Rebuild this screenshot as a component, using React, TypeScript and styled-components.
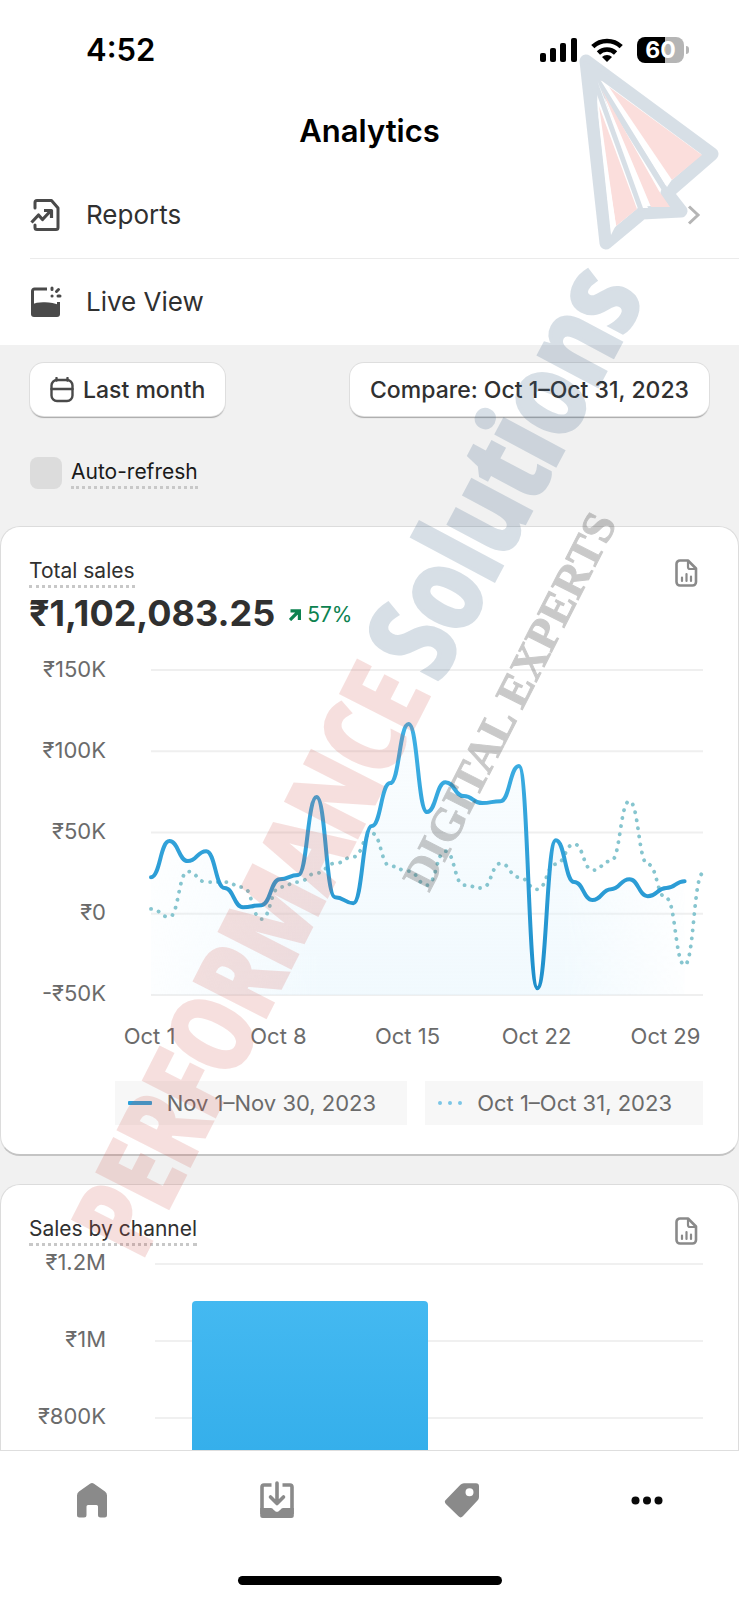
import React from 'react';
import styled, { createGlobalStyle } from 'styled-components';

const GlobalStyle = createGlobalStyle`
  *, *::before, *::after { box-sizing: border-box; }
  body { margin: 0; background: #fff; }
  body, button, input { font-family: Inter, "Liberation Sans", sans-serif; }
  h1, h2, p, ul { margin: 0; padding: 0; font-weight: 400; }
  svg { display: block; }
`;

const Screen = styled.div`
  position: relative;
  display: flex;
  flex-direction: column;
  height: 100vh;
  overflow: hidden;
  background: #fff;
  color: #303030;
`;

const StatusBar = styled.header`
  display: flex;
  align-items: center;
  justify-content: space-between;
  padding: 32px 50px 0 86px;
`;

const Clock = styled.time`
  font-size: 31px;
  line-height: 36px;
  font-weight: 600;
  color: #000;
`;

const StatusIcons = styled.div`
  display: flex;
  align-items: center;
  gap: 14px;
`;

const Battery = styled.div`
  display: flex;
  align-items: center;
  gap: 2px;

  &::after {
    content: '';
    width: 3px;
    height: 8px;
    border-radius: 0 3px 3px 0;
    background: #b5b5b5;
  }
`;

const BatteryLevel = styled.span<{ $percent: number }>`
  width: 47px;
  border-radius: 8px;
  background: linear-gradient(
    to right,
    #000 ${(p) => p.$percent}%,
    #b5b5b5 ${(p) => p.$percent}%
  );
  color: #fff;
  font-size: 23px;
  line-height: 26px;
  font-weight: 700;
  text-align: center;
`;

const PageTitle = styled.h1`
  padding: 43px 0 21px;
  font-size: 31px;
  line-height: 40px;
  font-weight: 600;
  text-align: center;
  color: #000;
`;

const MenuList = styled.ul`
  list-style: none;
`;

const MenuItem = styled.li`
  margin-left: 30px;

  & + & {
    border-top: 1px solid #ebebeb;
  }
`;

const MenuLink = styled.a`
  display: flex;
  align-items: center;
  gap: 24px;
  height: 86px;
  padding-right: 38px;
  font-size: 26px;
  line-height: 32px;
  color: #303030;
  text-decoration: none;
`;

const MenuLabel = styled.span`
  flex: 1;
`;

const Content = styled.main`
  flex: 1;
  min-height: 0;
  overflow: hidden;
  background: #f1f1f1;
`;

const Filters = styled.div`
  display: flex;
  justify-content: space-between;
  padding: 18px 30px 0;
`;

const FilterButton = styled.button`
  display: flex;
  align-items: center;
  gap: 9px;
  height: 53px;
  padding: 0 20px;
  border: 0;
  border-radius: 14px;
  background: #fff;
  box-shadow: 0 0 0 1px #dedede, 0 2px 1px #a8a8a8;
  color: #303030;
  font-size: 23px;
  line-height: 28px;
  font-weight: 500;
`;

const AutoRefresh = styled.label`
  display: flex;
  align-items: center;
  gap: 9px;
  padding: 41px 30px 37px;
  font-size: 21px;
  line-height: 28px;
  color: #1a1a1a;
`;

const Checkbox = styled.input`
  appearance: none;
  width: 32px;
  height: 32px;
  margin: 0;
  border-radius: 8px;
  background: #dcdcdc;
`;

const DottedText = styled.span`
  border-bottom: 3px dotted #c8c8c8;
`;

const Card = styled.section`
  margin-bottom: 28px;
  padding: 30px 35px 29px 28px;
  border: 1px solid #dcdcdc;
  border-bottom: 2px solid #c4c4c4;
  border-radius: 20px;
  background: #fff;
`;

const CardHeader = styled.div`
  display: flex;
  justify-content: space-between;
  align-items: flex-start;
`;

const CardTitle = styled.h2`
  border-bottom: 3px dotted #c8c8c8;
  font-size: 21px;
  line-height: 28px;
`;

const IconButton = styled.button`
  padding: 2px 5px 0 0;
  border: 0;
  background: none;
`;

const Headline = styled.p`
  display: flex;
  align-items: center;
  gap: 14px;
  padding-top: 2px;
`;

const HeadlineValue = styled.strong`
  font-size: 36px;
  line-height: 46px;
  font-weight: 700;
`;

const Change = styled.span`
  display: flex;
  align-items: center;
  gap: 6px;
  padding-top: 4px;
  font-size: 21px;
  line-height: 28px;
  color: #0c8250;
`;

const Chart = styled.div<{ $gap: number; $offset: number }>`
  display: flex;
  gap: ${(p) => p.$gap}px;
  margin-top: ${(p) => p.$offset}px;
`;

const YAxis = styled.div<{ $step: number }>`
  display: grid;
  grid-auto-rows: ${(p) => p.$step}px;
  width: 77px;
  margin-top: -14px;
  font-size: 22px;
  line-height: 26px;
  text-align: right;
  color: #6b6b6b;
`;

const Plot = styled.div`
  flex: 1;
  min-width: 0;

  svg {
    width: 100%;
    overflow: visible;
  }
`;

const XAxis = styled.div`
  display: grid;
  grid-template-columns: repeat(5, 1fr);
  margin: 27px -27px 0 -66px;
  font-size: 22px;
  line-height: 28px;
  text-align: center;
  color: #6b6b6b;
`;

const Legend = styled.div`
  display: flex;
  justify-content: flex-end;
  gap: 18px;
  margin-top: 20px;
`;

const LegendItem = styled.div`
  display: flex;
  align-items: center;
  gap: 15px;
  height: 44px;
  padding: 0 31px 0 13px;
  background: #f7f7f7;
  font-size: 22px;
  line-height: 28px;
  white-space: nowrap;
  color: #6b6b6b;
`;

const BarPlot = styled(Plot)`
  position: relative;
`;

const GridLine = styled.div`
  height: 77px;
  border-top: 2px solid #f0f0f0;
`;

const Bar = styled.div`
  position: absolute;
  top: 38px;
  bottom: 0;
  left: 37px;
  width: 43%;
  border-radius: 4px 4px 0 0;
  background: linear-gradient(#44b9f1, #35afeb 150px, #1f9fe0);
`;

const TabBar = styled.nav`
  border-top: 1px solid #dedede;
  background: #fff;
`;

const Tabs = styled.div`
  display: grid;
  grid-template-columns: repeat(4, 1fr);
  justify-items: center;
  padding: 29px 0 56px;
`;

const Tab = styled.a<{ $active?: boolean }>`
  color: ${(p) => (p.$active ? '#0a0a0a' : '#8a8a8a')};
`;

const HomeIndicator = styled.div`
  width: 264px;
  height: 9px;
  margin: 0 auto 15px;
  border-radius: 5px;
  background: #000;
`;

const Watermark = styled.svg`
  position: absolute;
  top: 0;
  left: 0;
  width: 100%;
  pointer-events: none;
`;

const BrandText = styled.text<{ $size: number }>`
  font: 700 ${(p) => p.$size}px "Open Sans Condensed", "Liberation Sans Narrow", sans-serif;
  stroke-width: 4px;
`;

const TaglineText = styled.text`
  font: 700 46px "Liberation Serif", serif;
  fill: #505050;
  stroke: #505050;
  stroke-width: 1px;
`;

const SignalIcon = () => (
  <svg width="37" height="24" viewBox="0 0 37 24" aria-label="Signal">
    <rect x="0" y="15" width="6" height="9" rx="2" />
    <rect x="10" y="10" width="6" height="14" rx="2" />
    <rect x="20" y="5" width="6" height="19" rx="2" />
    <rect x="31" y="0" width="6" height="24" rx="2" />
  </svg>
);

const WifiIcon = () => (
  <svg width="32" height="24" viewBox="0 0 32 24" fill="none" stroke="#000" strokeWidth="4.6" aria-label="Wi-Fi">
    <path d="M1.8 8.700a20.4 20.4 0 0 1 28.4 0" />
    <path d="M7.4 15a12.3 12.3 0 0 1 17.2 0" />
    <path d="M16 24l-5-5a7.2 7.2 0 0 1 10 0z" fill="#000" stroke="none" />
  </svg>
);

const ReportsIcon = () => (
  <svg width="32" height="32" viewBox="0 0 32 32" fill="none" stroke="#4a4a4a" strokeWidth="3" strokeLinecap="round" strokeLinejoin="round">
    <path d="M5 9V3.500a2 2 0 0 1 2-2h14.500l6.500 7.500v19.500a2 2 0 0 1-2 2H7a2 2 0 0 1-2-2v-2.500" />
    <path d="M1.500 23.500l7-7.500 4 4.500 8.500-9M14 11.500H21.500V19" strokeWidth="3.200" strokeLinecap="butt" />
  </svg>
);

const LiveIcon = () => (
  <svg width="32" height="32" viewBox="0 0 32 32" fill="none" stroke="#4a4a4a" strokeWidth="3" strokeLinecap="round">
    <path d="M17 3H4.500A2 2 0 0 0 2.500 5V28M28.500 16v12" strokeLinecap="butt" />
    <path d="M1 19c4-2.500 9-3 14-2.800s10 1 15 3V28a3 3 0 0 1-3 3H4a3 3 0 0 1-3-3z" fill="#4a4a4a" stroke="none" />
    <path d="M22 2v1.500M28.500 3.500l-2 2M22 10h.1M28 10h2" />
  </svg>
);

const ChevronIcon = () => (
  <svg width="14" height="20" viewBox="0 0 14 20" fill="none" stroke="#b5b5b5" strokeWidth="3">
    <path d="M2 1.500l9 8.500-9 8.500" />
  </svg>
);

const CalendarIcon = () => (
  <svg width="24" height="26" viewBox="0 0 24 26" fill="none" stroke="#4a4a4a" strokeWidth="2.400" strokeLinecap="round">
    <rect x="1.500" y="3" width="21" height="21" rx="5.500" />
    <path d="M1.500 12h21M6.500 1v2.500M17.500 1v2.500" />
  </svg>
);

const DocumentIcon = () => (
  <svg width="23" height="28" viewBox="0 0 23 28" fill="none" stroke="#8a8a8a" strokeWidth="2.600" strokeLinecap="round" strokeLinejoin="round">
    <path d="M5 1.500h8l8 8V23a3.500 3.500 0 0 1-3.500 3.500H5A3.500 3.500 0 0 1 1.500 23V5A3.500 3.500 0 0 1 5 1.500z" />
    <path d="M13 2v6a2 2 0 0 0 2 2h6M7 18.500V22M11.500 15v7M16 17.500V22" strokeWidth="2.200" />
  </svg>
);

const UpArrowIcon = () => (
  <svg width="12" height="12" viewBox="0 0 12 12" fill="none" stroke="#0c8250" strokeWidth="3.200">
    <path d="M1 11l8.500-8.500M1.500 1.800h8.900v9.200" />
  </svg>
);

const HomeIcon = () => (
  <svg width="36" height="40" viewBox="0 0 36 40" fill="currentColor">
    <path d="M16 3.800a3.500 3.500 0 0 1 4 0l11 7.700A5 5 0 0 1 33 15.500V35a2.500 2.500 0 0 1-2.500 2.500H26.500A2.500 2.500 0 0 1 24 35V26.500a1.500 1.500 0 0 0-1.500-1.500H14a1.500 1.500 0 0 0-1.500 1.500V35a2.500 2.500 0 0 1-2.500 2.500H5.500A2.500 2.500 0 0 1 3 35V15.500a5 5 0 0 1 2-4z" />
  </svg>
);

const OrdersIcon = () => (
  <svg width="36" height="40" viewBox="0 0 36 40" fill="none" stroke="currentColor" strokeWidth="3.600">
    <path d="M12.500 5H5a2 2 0 0 0-2 2v27M23.500 5H31a2 2 0 0 1 2 2v27" />
    <path d="M1.200 28H12c2 0 3.500 3.800 6 3.800s4-3.800 6-3.800h10.800v7.500a2.500 2.500 0 0 1-2.500 2.500H3.700a2.500 2.500 0 0 1-2.500-2.500z" fill="currentColor" stroke="none" />
    <path d="M18 3v20M11.500 17l6.500 6.500 6.500-6.500" strokeLinecap="round" strokeLinejoin="round" />
  </svg>
);

const ProductsIcon = () => (
  <svg width="36" height="40" viewBox="0 0 36 40" fill="currentColor">
    <path fillRule="evenodd" d="M20 3.200h12a3 3 0 0 1 3 3V17a5 5 0 0 1-1.500 3.500L18.800 36.300a3 3 0 0 1-4.300 0L1.900 24a3 3 0 0 1 0-4.300L16.400 4.700A5 5 0 0 1 20 3.200zM25.500 8.200a4 4 0 1 0 0 8 4 4 0 0 0 0-8z" />
  </svg>
);

const MoreIcon = () => (
  <svg width="36" height="40" viewBox="0 0 36 40" fill="currentColor">
    <circle cx="6.500" cy="20.500" r="4" />
    <circle cx="18" cy="20.500" r="4" />
    <circle cx="29.500" cy="20.500" r="4" />
  </svg>
);

/* Daily sales in thousands of rupees. */
const november = [
  22.5, 44.7, 32.4, 38.5, 15.8, 4, 5.3, 21.3, 23.8, 71.8, 10.2, 6.5, 54, 80.4, 116.7, 62.6, 81,
  72.4, 68.1, 69.3, 90.9, -45.8, 45.3, 19.5, 8.4, 15.1, 21.3, 10.8, 15.8, 20,
];
const october = [
  3, -2, 26, 19.5, 19.5, 16.4, -3.3, 16.4, 19.5, 25, 31, 35, 49.6, 29.3, 26.2, 17.6, 38.5, 17.6,
  15.8, 31, 22.5, 15, 30.5, 42.9, 26.8, 32.4, 69.3, 30.5, 9.6, -31.6, 25,
];

const PLOT_WIDTH = 552;
const PLOT_HEIGHT = 325;
const xAt = (day: number) => (day * PLOT_WIDTH) / 30;
const yAt = (value: number) => ((150 - value) / 200) * PLOT_HEIGHT;

const roundedSteps = (values: number[]) =>
  values
    .map((value, i) => {
      if (i === 0) return `M0 ${yAt(value)}`;
      const middle = (xAt(i - 1) + xAt(i)) / 2;
      return `C${middle} ${yAt(values[i - 1])} ${middle} ${yAt(value)} ${xAt(i)} ${yAt(value)}`;
    })
    .join('');

const SalesPlot = () => {
  const line = roundedSteps(november);
  return (
    <svg height={PLOT_HEIGHT} viewBox={`0 0 ${PLOT_WIDTH} ${PLOT_HEIGHT}`} preserveAspectRatio="none" role="img" aria-label="Total sales over time">
      <defs>
        <linearGradient id="area" x1="0" y1="0" x2="0" y2="1">
          <stop offset="0" stopColor="#e6f5fd" stopOpacity="0.2" />
          <stop offset="1" stopColor="#e6f5fd" stopOpacity="0.55" />
        </linearGradient>
        <linearGradient id="line" x1="0" y1="0" x2="0" y2="1">
          <stop offset="0" stopColor="#3fb1e5" />
          <stop offset="1" stopColor="#1f8fcb" />
        </linearGradient>
        <linearGradient id="fade">
          <stop offset="0" stopColor="#fff" stopOpacity="0.2" />
          <stop offset="0.3" stopColor="#fff" />
          <stop offset="0.75" stopColor="#fff" />
          <stop offset="1" stopColor="#fff" stopOpacity="0" />
        </linearGradient>
        <mask id="edges">
          <rect width={PLOT_WIDTH} height={PLOT_HEIGHT} fill="url(#fade)" />
        </mask>
      </defs>
      {[150, 100, 50, 0, -50].map((value) => (
        <path key={value} d={`M0 ${yAt(value)}H${PLOT_WIDTH}`} stroke="#efefef" strokeWidth="2" />
      ))}
      <path d={`${line}V${PLOT_HEIGHT}H0Z`} fill="url(#area)" mask="url(#edges)" />
      <path d={roundedSteps(october)} fill="none" stroke="#86c5cf" strokeWidth="3.800" strokeLinecap="round" strokeDasharray="0.1 8" />
      <path d={line} fill="none" stroke="url(#line)" strokeWidth="4" strokeLinecap="round" />
    </svg>
  );
};

const BrandMark = () => (
  <Watermark viewBox="0 0 739 1600" aria-hidden="true">
    <g opacity="0.200" fill="#3d6285" stroke="#3d6285">
      <path d="M586 61L712 154 667 193 681 211 642 213 606 243Z" fill="none" strokeWidth="13" strokeLinejoin="round" />
      <path d="M592 72L642 211M592 72L667 193" fill="none" strokeWidth="6" />
      <path d="M583 60L597 105 598 80 625 86Z" stroke="none" />
    </g>
    <g fill="#fbdedc">
      <path d="M609 87L702 155 672 180Z" />
      <path d="M602 90L659 191 670 207 651 207Z" />
      <path d="M599 106L637 209 616 226Z" />
    </g>
    <g fill="#fff">
      <path d="M604 84L671 181 667 187Z" />
      <path d="M597 80L648 208 643 208Z" />
      <path d="M597 104L616 225 611 235Z" />
    </g>
    <g opacity="0.180" fill="#d0554c" stroke="#d0554c">
      <BrandText $size={111} transform="translate(141 1261) rotate(-63)">
        PERFORMANCE
      </BrandText>
    </g>
    <g opacity="0.200" fill="#3d6285" stroke="#3d6285">
      <BrandText $size={122} transform="translate(439 684) rotate(-62)">
        Solutions
      </BrandText>
    </g>
    <g opacity="0.300">
      <TaglineText transform="translate(429 893) rotate(-63)">DIGITAL EXPERTS</TaglineText>
    </g>
  </Watermark>
);

export default function App() {
  return (
    <Screen>
      <GlobalStyle />
      <StatusBar>
        <Clock>4:52</Clock>
        <StatusIcons>
          <SignalIcon />
          <WifiIcon />
          <Battery>
            <BatteryLevel $percent={60}>60</BatteryLevel>
          </Battery>
        </StatusIcons>
      </StatusBar>
      <PageTitle>Analytics</PageTitle>
      <MenuList>
        <MenuItem>
          <MenuLink href="#reports">
            <ReportsIcon />
            <MenuLabel>Reports</MenuLabel>
            <ChevronIcon />
          </MenuLink>
        </MenuItem>
        <MenuItem>
          <MenuLink href="#live">
            <LiveIcon />
            <MenuLabel>Live View</MenuLabel>
          </MenuLink>
        </MenuItem>
      </MenuList>

      <Content>
        <Filters>
          <FilterButton type="button">
            <CalendarIcon />
            Last month
          </FilterButton>
          <FilterButton type="button">Compare: Oct 1–Oct 31, 2023</FilterButton>
        </Filters>
        <AutoRefresh>
          <Checkbox type="checkbox" />
          <DottedText>Auto-refresh</DottedText>
        </AutoRefresh>

        <Card>
          <CardHeader>
            <CardTitle>Total sales</CardTitle>
            <IconButton type="button" aria-label="View total sales report">
              <DocumentIcon />
            </IconButton>
          </CardHeader>
          <Headline>
            <HeadlineValue>₹1,102,083.25</HeadlineValue>
            <Change>
              <UpArrowIcon />
              57%
            </Change>
          </Headline>
          <Chart $gap={45} $offset={34}>
            <YAxis $step={81}>
              <span>₹150K</span>
              <span>₹100K</span>
              <span>₹50K</span>
              <span>₹0</span>
              <span>-₹50K</span>
            </YAxis>
            <Plot>
              <SalesPlot />
              <XAxis>
                <span>Oct 1</span>
                <span>Oct 8</span>
                <span>Oct 15</span>
                <span>Oct 22</span>
                <span>Oct 29</span>
              </XAxis>
            </Plot>
          </Chart>
          <Legend>
            <LegendItem>
              <svg width="24" height="4">
                <rect width="24" height="4" rx="1" fill="#2b9fd9" />
              </svg>
              Nov 1–Nov 30, 2023
            </LegendItem>
            <LegendItem>
              <svg width="24" height="4" fill="#7cc6e6">
                <circle cx="2" cy="2" r="2" />
                <circle cx="12" cy="2" r="2" />
                <circle cx="22" cy="2" r="2" />
              </svg>
              Oct 1–Oct 31, 2023
            </LegendItem>
          </Legend>
        </Card>

        <Card>
          <CardHeader>
            <CardTitle>Sales by channel</CardTitle>
            <IconButton type="button" aria-label="View sales by channel report">
              <DocumentIcon />
            </IconButton>
          </CardHeader>
          <Chart $gap={49} $offset={17}>
            <YAxis $step={77}>
              <span>₹1.2M</span>
              <span>₹1M</span>
              <span>₹800K</span>
            </YAxis>
            <BarPlot>
              <GridLine />
              <GridLine />
              <GridLine />
              <Bar />
            </BarPlot>
          </Chart>
        </Card>
      </Content>

      <TabBar>
        <Tabs>
          <Tab href="#home" aria-label="Home">
            <HomeIcon />
          </Tab>
          <Tab href="#orders" aria-label="Orders">
            <OrdersIcon />
          </Tab>
          <Tab href="#products" aria-label="Products">
            <ProductsIcon />
          </Tab>
          <Tab href="#more" aria-label="More" $active>
            <MoreIcon />
          </Tab>
        </Tabs>
        <HomeIndicator />
      </TabBar>
      <BrandMark />
    </Screen>
  );
}
